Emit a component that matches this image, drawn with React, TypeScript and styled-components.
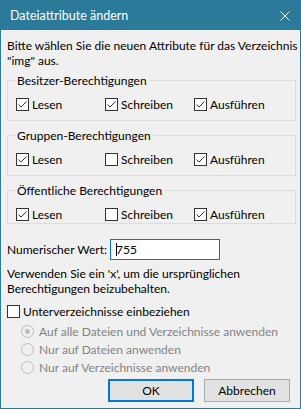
import { FC, useState } from "react";
import styled, { createGlobalStyle } from "styled-components";

const GlobalStyle = createGlobalStyle`
  html, body {
    margin: 0;
    padding: 0;
    background: #ffffff;
  }
  * {
    box-sizing: border-box;
  }
`;

type PermKey = "read" | "write" | "exec";
type Perms = Record<PermKey, boolean>;

const groups: { title: string; initial: Perms; last?: boolean }[] = [
  { title: "Besitzer-Berechtigungen", initial: { read: true, write: true, exec: true } },
  { title: "Gruppen-Berechtigungen", initial: { read: true, write: false, exec: true } },
  { title: "Öffentliche Berechtigungen", initial: { read: true, write: false, exec: true }, last: true },
];

const permLabels: { key: PermKey; label: string }[] = [
  { key: "read", label: "Lesen" },
  { key: "write", label: "Schreiben" },
  { key: "exec", label: "Ausführen" },
];

const radioLabels = [
  "Auf alle Dateien und Verzeichnisse anwenden",
  "Nur auf Dateien anwenden",
  "Nur auf Verzeichnisse anwenden",
];

const CheckBox: FC<{ checked: boolean; onToggle: () => void; label: string }> = ({
  checked,
  onToggle,
  label,
}) => (
  <CheckLabel onClick={onToggle}>
    <Box>
      {checked && (
        <svg width="11" height="11" viewBox="0 0 11 11">
          <path d="M1.5 5.5 L4 8 L9.5 2.5" fill="none" stroke="#333333" strokeWidth="1" />
        </svg>
      )}
    </Box>
    <span>{label}</span>
  </CheckLabel>
);

const PermGroup: FC<{ title: string; initial: Perms; last?: boolean }> = ({ title, initial, last }) => {
  const [perms, setPerms] = useState<Perms>(initial);
  const toggle = (key: PermKey) => setPerms({ ...perms, [key]: !perms[key] });

  return (
    <Group $last={last}>
      <Legend>{title}</Legend>
      <PermRow>
        {permLabels.map((p) => (
          <CheckBox key={p.key} checked={perms[p.key]} onToggle={() => toggle(p.key)} label={p.label} />
        ))}
      </PermRow>
    </Group>
  );
};

const App: FC = () => {
  const [value, setValue] = useState("755");
  const [recursive, setRecursive] = useState(false);

  return (
    <>
      <GlobalStyle />
      <Dialog>
        <TitleBar>
          <Title>Dateiattribute ändern</Title>
          <CloseButton>
            <svg width="10" height="10" viewBox="0 0 10 10">
              <path d="M0.5 0.5 L9.5 9.5 M9.5 0.5 L0.5 9.5" stroke="#ffffff" strokeWidth="1" />
            </svg>
          </CloseButton>
        </TitleBar>
        <Body>
          <Text>
            Bitte wählen Sie die neuen Attribute für das Verzeichnis
            <br />
            "img" aus.
          </Text>
          {groups.map((g) => (
            <PermGroup key={g.title} title={g.title} initial={g.initial} last={g.last} />
          ))}
          <ValueRow>
            <ValueLabel>Numerischer Wert:</ValueLabel>
            <ValueInput>
              <Caret />
              <input value={value} onChange={(e) => setValue(e.target.value)} />
            </ValueInput>
          </ValueRow>
          <Hint>
            Verwenden Sie ein 'x', um die ursprünglichen
            <br />
            Berechtigungen beizubehalten.
          </Hint>
          <Recursive>
            <CheckBox checked={recursive} onToggle={() => setRecursive(!recursive)} label="Unterverzeichnisse einbeziehen" />
          </Recursive>
          <RadioList>
            {radioLabels.map((r, i) => (
              <RadioRow key={r}>
                <Radio $checked={i === 0} />
                <span>{r}</span>
              </RadioRow>
            ))}
          </RadioList>
          <Buttons>
            <Button $default>OK</Button>
            <Button>Abbrechen</Button>
          </Buttons>
        </Body>
      </Dialog>
    </>
  );
};

export default App;

// styles
const Dialog = styled.div`
  width: 301px;
  height: 409px;
  border: 1px solid #2b7a99;
  border-top: none;
  background: #f0f0f0;
  display: flex;
  flex-direction: column;
  font-family: Lato, "Noto Sans", sans-serif;
  font-size: 12px;
  line-height: 15px;
  color: #000000;
`;

const TitleBar = styled.div`
  height: 30px;
  background: #2b7a99;
  display: flex;
  align-items: center;
  justify-content: space-between;
  padding: 0 10px 0 9px;
  flex-shrink: 0;
`;

const Title = styled.span`
  color: #ffffff;
  font-size: 12.5px;
  white-space: nowrap;
`;

const CloseButton = styled.div`
  width: 10px;
  height: 10px;
  display: flex;
  margin-top: 1px;
`;

const Body = styled.div`
  flex: 1;
  padding: 8px 4px 0 6px;
  display: flex;
  flex-direction: column;
`;

const Text = styled.div`
  white-space: nowrap;
`;

const Group = styled.fieldset<{ $last?: boolean }>`
  margin: 7px 0 0;
  padding: 9px 0 ${(p) => (p.$last ? "1px" : "8px")} 8px;
  border: 1px solid #dcdcdc;
  min-width: 0;

  &:first-of-type {
    margin-top: 5px;
  }
`;

const Legend = styled.legend`
  padding: 0 2px;
  margin-left: -1px;
  line-height: 15px;
  white-space: nowrap;
`;

const PermRow = styled.div`
  display: grid;
  grid-template-columns: 89px 89px 1fr;
`;

const CheckLabel = styled.label`
  display: flex;
  align-items: center;
  gap: 3px;
  height: 15px;
  white-space: nowrap;
  cursor: default;
`;

const Box = styled.span`
  width: 13px;
  height: 13px;
  border: 1px solid #333333;
  background: #ffffff;
  display: flex;
  align-items: center;
  justify-content: center;
  flex-shrink: 0;
`;

const ValueRow = styled.div`
  display: flex;
  align-items: center;
  margin-top: 15px;
`;

const ValueLabel = styled.span`
  width: 103px;
  white-space: nowrap;
`;

const ValueInput = styled.div`
  width: 110px;
  height: 21px;
  border: 1px solid #0078d7;
  background: #ffffff;
  display: flex;
  align-items: center;
  padding-left: 5px;

  input {
    border: none;
    outline: none;
    background: transparent;
    font: inherit;
    padding: 0;
    width: 90px;
    color: #000000;
  }
`;

const Caret = styled.span`
  width: 1px;
  height: 13px;
  background: #000000;
  margin-right: -1px;
`;

const Hint = styled.div`
  margin-top: 6px;
  white-space: nowrap;
`;

const Recursive = styled.div`
  margin-top: 8px;
`;

const RadioList = styled.div`
  display: flex;
  flex-direction: column;
  margin-top: 3px;
  padding-left: 14px;
`;

const RadioRow = styled.div`
  display: flex;
  align-items: center;
  gap: 5px;
  height: 18px;
  color: #838383;
  white-space: nowrap;
`;

const Radio = styled.span<{ $checked?: boolean }>`
  width: 13px;
  height: 13px;
  border-radius: 50%;
  border: 1px solid #bcbcbc;
  background: #f0f0f0;
  display: flex;
  align-items: center;
  justify-content: center;

  &::after {
    content: "";
    width: 5px;
    height: 5px;
    border-radius: 50%;
    background: ${(p) => (p.$checked ? "#bcbcbc" : "transparent")};
  }
`;

const Buttons = styled.div`
  display: flex;
  justify-content: flex-end;
  gap: 10px;
  margin-top: 3px;
  padding-right: 6px;
`;

const Button = styled.button<{ $default?: boolean }>`
  width: 86px;
  height: 23px;
  font: inherit;
  color: #000000;
  background: #e1e1e1;
  border: 1px solid ${(p) => (p.$default ? "#0078d7" : "#adadad")};
  box-shadow: ${(p) => (p.$default ? "inset 0 0 0 1px #0078d7" : "none")};
  padding: 0;
`;
